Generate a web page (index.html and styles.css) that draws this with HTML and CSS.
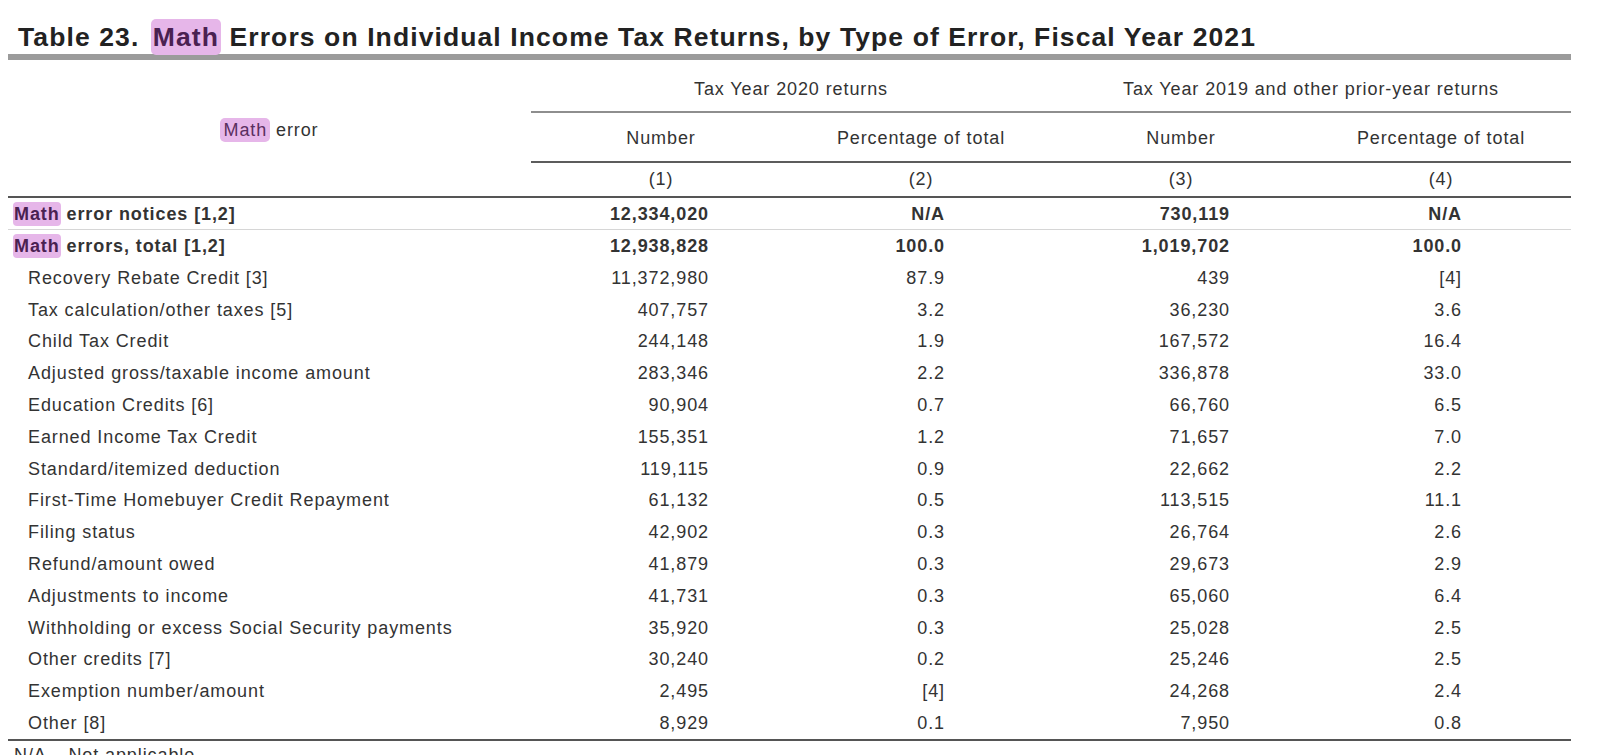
FILE: index.html
```html
<!DOCTYPE html>
<html lang="en">
<head>
<meta charset="utf-8">
<title>Table 23. Math Errors on Individual Income Tax Returns</title>
<link rel="stylesheet" href="styles.css">
</head>
<body>
<div class="page">
  <h1 class="title">Table 23. <mark class="hl hl-t">Math</mark> Errors on Individual Income Tax Returns, by Type of Error, Fiscal Year 2021</h1>
  <table class="data">
    <colgroup>
      <col class="c-stub">
      <col class="c-val"><col class="c-val"><col class="c-val"><col class="c-val">
    </colgroup>
    <thead>
      <tr class="r1">
        <th rowspan="3" class="stub"><mark class="hl hl-s">Math</mark> error</th>
        <th colspan="2" class="grp">Tax Year 2020 returns</th>
        <th colspan="2" class="grp">Tax Year 2019 and other prior-year returns</th>
      </tr>
      <tr class="r2">
        <th>Number</th><th>Percentage of total</th><th>Number</th><th>Percentage of total</th>
      </tr>
      <tr class="r3">
        <th>(1)</th><th>(2)</th><th>(3)</th><th>(4)</th>
      </tr>
    </thead>
    <tbody>
      <tr class="lead first">
        <td class="lbl"><mark class="hl hl-b">Math</mark> error notices [1,2]</td>
        <td class="n1">12,334,020</td><td class="p1">N/A</td><td class="n2">730,119</td><td class="p2">N/A</td>
      </tr>
      <tr class="lead">
        <td class="lbl"><mark class="hl hl-b">Math</mark> errors, total [1,2]</td>
        <td class="n1">12,938,828</td><td class="p1">100.0</td><td class="n2">1,019,702</td><td class="p2">100.0</td>
      </tr>
      <tr><td class="lbl">Recovery Rebate Credit [3]</td><td class="n1">11,372,980</td><td class="p1">87.9</td><td class="n2">439</td><td class="p2">[4]</td></tr>
      <tr><td class="lbl">Tax calculation/other taxes [5]</td><td class="n1">407,757</td><td class="p1">3.2</td><td class="n2">36,230</td><td class="p2">3.6</td></tr>
      <tr><td class="lbl">Child Tax Credit</td><td class="n1">244,148</td><td class="p1">1.9</td><td class="n2">167,572</td><td class="p2">16.4</td></tr>
      <tr><td class="lbl">Adjusted gross/taxable income amount</td><td class="n1">283,346</td><td class="p1">2.2</td><td class="n2">336,878</td><td class="p2">33.0</td></tr>
      <tr><td class="lbl">Education Credits [6]</td><td class="n1">90,904</td><td class="p1">0.7</td><td class="n2">66,760</td><td class="p2">6.5</td></tr>
      <tr><td class="lbl">Earned Income Tax Credit</td><td class="n1">155,351</td><td class="p1">1.2</td><td class="n2">71,657</td><td class="p2">7.0</td></tr>
      <tr><td class="lbl">Standard/itemized deduction</td><td class="n1">119,115</td><td class="p1">0.9</td><td class="n2">22,662</td><td class="p2">2.2</td></tr>
      <tr><td class="lbl">First-Time Homebuyer Credit Repayment</td><td class="n1">61,132</td><td class="p1">0.5</td><td class="n2">113,515</td><td class="p2">11.1</td></tr>
      <tr><td class="lbl">Filing status</td><td class="n1">42,902</td><td class="p1">0.3</td><td class="n2">26,764</td><td class="p2">2.6</td></tr>
      <tr><td class="lbl">Refund/amount owed</td><td class="n1">41,879</td><td class="p1">0.3</td><td class="n2">29,673</td><td class="p2">2.9</td></tr>
      <tr><td class="lbl">Adjustments to income</td><td class="n1">41,731</td><td class="p1">0.3</td><td class="n2">65,060</td><td class="p2">6.4</td></tr>
      <tr><td class="lbl">Withholding or excess Social Security payments</td><td class="n1">35,920</td><td class="p1">0.3</td><td class="n2">25,028</td><td class="p2">2.5</td></tr>
      <tr><td class="lbl">Other credits [7]</td><td class="n1">30,240</td><td class="p1">0.2</td><td class="n2">25,246</td><td class="p2">2.5</td></tr>
      <tr><td class="lbl">Exemption number/amount</td><td class="n1">2,495</td><td class="p1">[4]</td><td class="n2">24,268</td><td class="p2">2.4</td></tr>
      <tr class="last"><td class="lbl">Other [8]</td><td class="n1">8,929</td><td class="p1">0.1</td><td class="n2">7,950</td><td class="p2">0.8</td></tr>
    </tbody>
  </table>
  <p class="note">N/A – Not applicable.</p>
</div>
</body>
</html>
```

FILE: styles.css
```css
html, body {
  margin: 0;
  padding: 0;
  background: #ffffff;
}

body {
  font-family: "Liberation Sans", Arial, "Helvetica Neue", sans-serif;
  color: #333333;
}

.page {
  width: 1563px;
  height: 755px;
  padding-left: 8px;
  overflow: hidden;
}

.title {
  margin: 0;
  padding: 22px 0 2px 10px;
  font-size: 26.5px;
  line-height: 30px;
  font-weight: bold;
  letter-spacing: 1.1px;
  color: #222222;
  white-space: nowrap;
  border-bottom: 6px solid #9b9b9b;
}

.hl {
  background: #e6b6e9;
  color: #4a2151;
  border-radius: 5px;
  padding: 3px 2px;
}

.hl-t {
  margin-left: 3px;
}

.hl-s {
  padding: 2px 3px;
  color: #5a2f60;
}

.hl-b {
  padding: 2px 1px;
  border-radius: 4px;
}

.data {
  width: 1563px;
  table-layout: fixed;
  border-collapse: separate;
  border-spacing: 0;
  font-size: 18px;
  line-height: 22px;
  letter-spacing: 0.9px;
}

.c-stub { width: 523px; }
.c-val { width: 260px; }

.data th {
  font-weight: normal;
  text-align: center;
  white-space: nowrap;
}

.r1 .grp {
  padding: 18px 0 11px;
  border-bottom: 2px solid #8e8e8e;
}

.stub {
  vertical-align: middle;
  padding-top: 4px;
  border-bottom: 2px solid #555555;
}

.r2 th {
  padding: 14px 0 12px;
  border-bottom: 2px solid #5c5c5c;
}

.r3 th {
  padding: 5px 0 6px;
  border-bottom: 2px solid #555555;
}

.data td {
  padding: 5px 0 4.8px;
  white-space: nowrap;
  text-align: right;
}

.data td.lbl {
  text-align: left;
  padding-left: 20px;
}

.lead td {
  font-weight: bold;
}

.lead td.lbl {
  padding-left: 5px;
}

.first td {
  padding-bottom: 4px;
  border-bottom: 1px solid #d6d6d6;
}

.data td.n1 { padding-right: 82px; }
.data td.p1 { padding-right: 106px; }
.data td.n2 { padding-right: 81px; }
.data td.p2 { padding-right: 109px; }

.last td {
  border-bottom: 2px solid #555555;
}

.note {
  margin: 0;
  padding: 3px 0 0 6px;
  font-size: 18px;
  line-height: 22px;
  letter-spacing: 0.9px;
  white-space: nowrap;
}
```
